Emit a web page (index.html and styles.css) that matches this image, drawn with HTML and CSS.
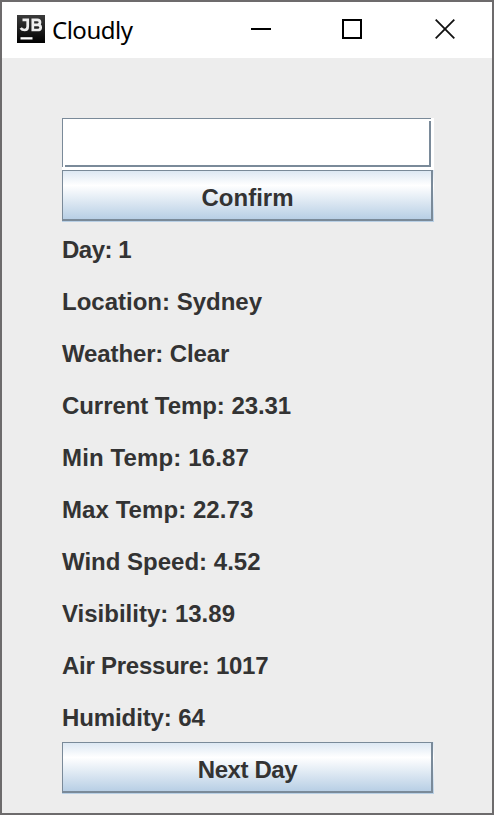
FILE: index.html
```html
<!DOCTYPE html>
<html lang="en">
<head>
<meta charset="utf-8">
<title>Cloudly</title>
<link rel="stylesheet" href="styles.css">
</head>
<body>
<div class="window">
  <header class="titlebar">
    <svg class="app-icon" viewBox="0 0 28 28" aria-hidden="true">
      <defs><linearGradient id="g" x1="0" y1="0" x2="0" y2="1"><stop offset="0" stop-color="#3b3b3b"/><stop offset="1" stop-color="#000"/></linearGradient></defs>
      <rect width="28" height="28" fill="url(#g)"/>
      <g fill="none" stroke="#ededed" stroke-width="2.7">
        <path d="M5.500 4.800H10.700V11.500Q10.700 15 7.600 15Q5 15 3.700 13"/>
        <path d="M15.800 4.800V15H20.500Q23.700 15 23.700 12.400Q23.700 9.800 20.500 9.800H15.800M20.500 9.800Q23 9.600 23 7.300Q23 4.800 20.300 4.800H14.450M14.450 15H17"/>
      </g>
      <rect x="3.500" y="22.200" width="12" height="2.300" fill="#fff"/>
    </svg>
    <h1 class="title">Cloudly</h1>
    <div class="controls">
      <svg viewBox="0 0 20 20"><path d="M0 10H20" stroke="#000" stroke-width="2"/></svg>
      <svg viewBox="0 0 20 20"><rect x="1" y="1" width="18" height="18" fill="none" stroke="#000" stroke-width="2"/></svg>
      <svg viewBox="0 0 20 20"><path d="M.7.700L19.300 19.300M19.300.700L.700 19.300" stroke="#111" stroke-width="1.800"/></svg>
    </div>
  </header>
  <main class="content">
    <div class="field"><input class="input" type="text" aria-label="Location"></div>
    <button class="button"><span class="face">Confirm</span></button>
    <p class="row day">Day: 1</p>
    <p class="row">Location: Sydney</p>
    <p class="row weather">Weather: Clear</p>
    <p class="row current">Current Temp: 23.31</p>
    <p class="row min">Min Temp: 16.87</p>
    <p class="row max">Max Temp: 22.73</p>
    <p class="row">Wind Speed: 4.52</p>
    <p class="row">Visibility: 13.89</p>
    <p class="row pressure">Air Pressure: 1017</p>
    <p class="row humidity">Humidity: 64</p>
    <button class="button next"><span class="face">Next Day</span></button>
  </main>
</div>
</body>
</html>
```
FILE: styles.css
```css
* { box-sizing: border-box; }
body { margin: 0; background: #ededed; }
.window {
  height: 815px;
  border: 2px solid #6d6b6c;
  background: #ededed;
}
.titlebar {
  height: 56px;
  display: flex;
  align-items: center;
  padding: 0 37px 2px 15px;
  background: #fff;
}
.app-icon { width: 28px; height: 28px; }
.title {
  margin: 2px 0 0 7px;
  font: 400 24px/32px "Noto Sans", sans-serif;
  letter-spacing: -0.5px;
  color: #000;
}
.controls { display: flex; gap: 72px; margin-left: auto; }
.controls svg { display: block; width: 20px; height: 20px; }
.controls svg:nth-child(2) { margin-left: -1px; margin-right: 1px; }
.content {
  display: flex;
  flex-direction: column;
  padding: 60px 58px 0 60px;
  font: 700 24px/52px "Liberation Sans", Arial, sans-serif;
  color: #333;
}
.field {
  height: 52px;
  padding: 0 3px 3px 0;
  background: #fff;
}
.input {
  display: block;
  width: 100%;
  height: 100%;
  border: 0;
  border-radius: 0;
  padding: 0 8px;
  background:
    linear-gradient(#7a8a99, #7a8a99) left top / 100% 1px no-repeat,
    linear-gradient(#7a8a99, #7a8a99) left top / 1px 100% no-repeat,
    linear-gradient(#7a8a99, #7a8a99) right bottom / 2px calc(100% - 3px) no-repeat,
    linear-gradient(#7a8a99, #7a8a99) right bottom / calc(100% - 3px) 2px no-repeat,
    #fff;
  font: inherit;
  outline: 0;
}
.button {
  display: block;
  height: 52px;
  border: 0;
  padding: 0 1px 1px 0;
  background: linear-gradient(#dde8f3, #fff 30%, #b8cfe5);
  font: inherit;
  color: inherit;
}
.face {
  display: block;
  height: 51px;
  border: solid #7a8a99;
  border-width: 1px 2px 2px 1px;
  background: linear-gradient(#dde8f3, #fff 30%, #b8cfe5);
  line-height: 54px;
  text-align: center;
  text-indent: 1px;
}
.row { height: 52px; margin: 0; padding-top: 2px; white-space: nowrap; }
.day { letter-spacing: -0.5px; }
.weather { letter-spacing: -0.13px; }
.current { letter-spacing: -0.06px; }
.min { letter-spacing: 0.14px; }
.max { letter-spacing: 0.07px; }
.pressure { letter-spacing: -0.25px; }
.humidity { letter-spacing: -0.1px; }
.next { letter-spacing: -0.4px; }
```
